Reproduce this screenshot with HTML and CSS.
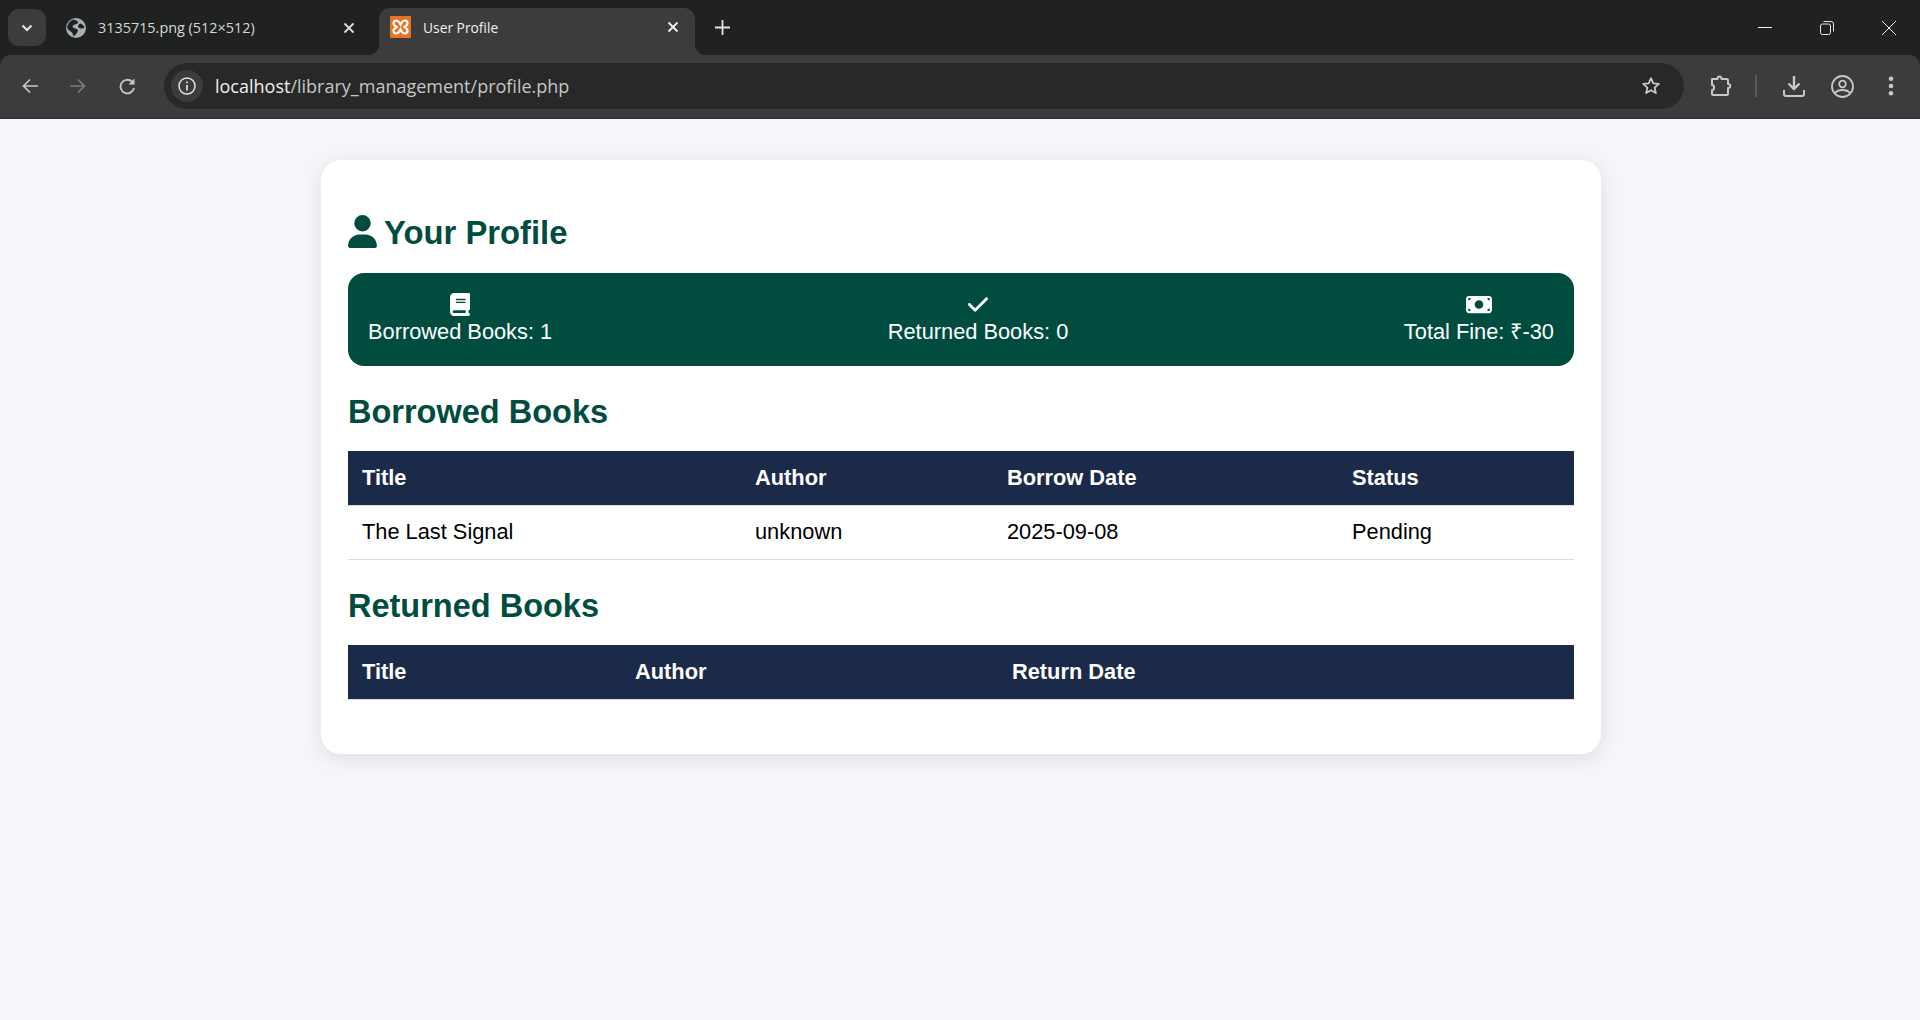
FILE: index.html

```html
<!DOCTYPE html>
<html lang="en">
<head>
  <meta charset="UTF-8" />
  <title>User Profile</title>
  <link rel="stylesheet" href="styles.css">
</head>
<body>
  <div class="browser">
    <div class="tabstrip">
      <div class="tab-search">
        <svg width="14" height="14" viewBox="0 0 14 14"><path d="M2.500 4.500 7 9l4.500-4.500" fill="none" stroke="#e3e3e3" stroke-width="2.200"/></svg>
      </div>
      <div class="tab">
        <svg class="favicon" width="20" height="20" viewBox="0 0 20 20"><circle cx="10" cy="10" r="10" fill="#a9aeb4"/><path d="M7 1.500c2.500.5 5 1 5 2.700 0 2-3.500 1.800-5 3.300-1.300 1.300.5 2.500 2.500 3 2 .5 3 1.800 2 3.500-.8 1.400-2 3-4 4.500-.5-2-.8-3.500-2-4.500C4 13 1.800 11.500 1 10 1.500 6 3.500 3 7 1.500zM14.500 5.500c1.700.7 3.500 2 4 4-1.500 1.500-4.500 1.300-6 0-1.200-1.200.4-3.700 2-4z" fill="#202221"/></svg>
        <span class="tab-title">3135715.png (512×512)</span>
        <svg class="tab-x" width="12" height="12" viewBox="0 0 12 12"><path d="M1.500 1.500l9 9M10.500 1.500l-9 9" stroke="#dcdcdc" stroke-width="1.800"/></svg>
      </div>
      <div class="tab tab-active">
        <svg class="favicon" width="21" height="22" viewBox="0 0 21 22"><rect width="21" height="22" rx="1" fill="#e8742a"/><path d="M10.500 8.500C9 5.500 7.500 4.500 6 4.500c-2 0-2.500 2-2.500 3S5 10.500 7.500 11C5 11.500 3.500 13.500 3.500 14.500s.5 3 2.500 3c1.500 0 3-1 4.500-4 1.500 3 3 4 4.500 4 2 0 2.500-2 2.500-3S16 11.500 13.500 11c2.500-.5 4-2.500 4-3.500s-.5-3-2.500-3c-1.500 0-3 1-4.500 4z" fill="none" stroke="#fff" stroke-width="2.200"/></svg>
        <span class="tab-title">User Profile</span>
        <svg class="tab-x" width="12" height="12" viewBox="0 0 12 12"><path d="M1.500 1.500l9 9M10.500 1.500l-9 9" stroke="#f0f0f0" stroke-width="1.800"/></svg>
      </div>
      <svg class="new-tab" width="15" height="15" viewBox="0 0 15 15"><path d="M7.500 0v15M0 7.500h15" stroke="#e3e3e3" stroke-width="1.800"/></svg>
      <div class="window-btns">
        <svg width="14" height="14" viewBox="0 0 14 14"><path d="M0 6.500h14" stroke="#f0f0f0"/></svg>
        <svg width="14" height="14" viewBox="0 0 14 14"><rect x=".5" y="3" width="10" height="10.500" rx="2" fill="none" stroke="#e8e8e8"/><path d="M3.500 .5h7.500a2.500 2.500 0 0 1 2.500 2.500V10.500" fill="none" stroke="#e8e8e8"/></svg>
        <svg width="14" height="14" viewBox="0 0 14 14"><path d="M0 0l14 14M14 0L0 14" stroke="#f0f0f0"/></svg>
      </div>
    </div>
    <div class="toolbar">
      <svg class="nav" width="16" height="16" viewBox="0 0 16 16"><path d="M16 8H1.500M8 1.500 1.500 8 8 14.500" fill="none" stroke="#c8c8c8" stroke-width="1.700"/></svg>
      <svg class="nav nav-forward" width="16" height="16" viewBox="0 0 16 16"><path d="M0 8h14.500M8 1.500 14.500 8 8 14.500" fill="none" stroke="#7b7b7b" stroke-width="1.700"/></svg>
      <svg class="nav nav-last" width="17" height="17" viewBox="0 0 17 17"><path d="M15 10a6.800 6.800 0 1 1-1.900-6.300" fill="none" stroke="#c8c8c8" stroke-width="1.800"/><path d="M15.500 .5v6h-6z" fill="#c8c8c8"/></svg>
      <div class="omnibox">
        <div class="site-info">
          <svg width="18" height="18" viewBox="0 0 18 18"><circle cx="9" cy="9" r="8" fill="none" stroke="#e3e3e3" stroke-width="1.500"/><path d="M9 8v5.500M9 4.500v1.800" stroke="#e3e3e3" stroke-width="1.700"/></svg>
        </div>
        <span class="url"><span class="url-host">localhost</span>/library_management/profile.php</span>
        <svg class="star" width="20" height="20" viewBox="0 0 20 20"><path d="M10 2.200l2.300 5.200 5.600.5-4.300 3.700 1.300 5.500L10 14.200l-4.900 2.900 1.300-5.500L2.100 7.900l5.600-.5z" fill="none" stroke="#c8c8c8" stroke-width="1.800" stroke-linejoin="round"/></svg>
      </div>
      <div class="tools">
        <svg class="tool-ext" width="22" height="22" viewBox="0 0 22 22"><path d="M2 4h5.500c0-3.500 4-3.500 4 0H17a1 1 0 0 1 1 1v4c3 0 3 4 0 4v6a1 1 0 0 1-1 1H3a1 1 0 0 1-1-1v-4c2.800 0 2.800-5 0-5V5a1 1 0 0 1 0-1z" fill="none" stroke="#c8c8c8" stroke-width="2" stroke-linejoin="round"/></svg>
        <span class="tool-sep"></span>
        <svg class="tool-download" width="22" height="22" viewBox="0 0 22 22"><path d="M11 1v13M5.500 8.500 11 14l5.500-5.500" fill="none" stroke="#c8c8c8" stroke-width="2.400"/><path d="M1 15v4a2 2 0 0 0 2 2h16a2 2 0 0 0 2-2v-4" fill="none" stroke="#c8c8c8" stroke-width="2"/></svg>
        <svg class="tool-profile" width="23" height="23" viewBox="0 0 23 23"><circle cx="11.500" cy="11.500" r="10.500" fill="none" stroke="#c8c8c8" stroke-width="1.800"/><circle cx="11.500" cy="9" r="3.300" fill="none" stroke="#c8c8c8" stroke-width="1.800"/><path d="M4 18c3-4 12-4 15 0" fill="none" stroke="#c8c8c8" stroke-width="1.800"/></svg>
        <svg class="tool-menu" width="6" height="20" viewBox="0 0 6 20"><circle cx="3" cy="2.700" r="2.300" fill="#c8c8c8"/><circle cx="3" cy="10" r="2.300" fill="#c8c8c8"/><circle cx="3" cy="17.300" r="2.300" fill="#c8c8c8"/></svg>
      </div>
    </div>
  </div>

  <div class="profile-container">
    <h1 class="profile-heading">
      <svg width="29" height="33" viewBox="0 0 448 512"><path fill="#004d40" d="M224 256a128 128 0 1 0 0-256 128 128 0 1 0 0 256zm-45.700 48C79.800 304 0 383.800 0 482.300 0 498.700 13.300 512 29.700 512h388.600c16.400 0 29.700-13.300 29.700-29.700C448 383.800 368.200 304 269.700 304z"/></svg>
      Your Profile
    </h1>

    <div class="stats">
      <div class="stat">
        <svg width="20" height="23" viewBox="0 0 448 512"><path fill="#fff" d="M96 0C43 0 0 43 0 96v320c0 53 43 96 96 96h320c17.700 0 32-14.300 32-32s-14.300-32-32-32v-64c17.700 0 32-14.300 32-32V32c0-17.700-14.300-32-32-32zm0 384h256v64H96c-17.700 0-32-14.300-32-32s14.300-32 32-32zm32-240c0-8.800 7.200-16 16-16h192c8.800 0 16 7.200 16 16s-7.200 16-16 16H144c-8.800 0-16-7.200-16-16zm16 48h192c8.800 0 16 7.200 16 16s-7.200 16-16 16H144c-8.800 0-16-7.200-16-16s7.200-16 16-16z"/></svg>
        <span>Borrowed Books: 1</span>
      </div>
      <div class="stat">
        <svg width="20" height="23" viewBox="0 0 448 512"><path fill="#fff" d="M438.600 105.400c12.500 12.500 12.500 32.800 0 45.300l-256 256c-12.500 12.500-32.800 12.500-45.300 0l-128-128c-12.500-12.500-12.500-32.800 0-45.300s32.800-12.500 45.300 0L160 338.700l233.400-233.300c12.500-12.500 32.800-12.500 45.300 0z"/></svg>
        <span>Returned Books: 0</span>
      </div>
      <div class="stat">
        <svg width="26" height="23" viewBox="0 0 576 512"><path fill="#fff" fill-rule="evenodd" d="M64 64C28.700 64 0 92.700 0 128v256c0 35.300 28.700 64 64 64h448c35.300 0 64-28.700 64-64V128c0-35.300-28.700-64-64-64zm224 96a96 96 0 1 1 0 192 96 96 0 1 1 0-192zM48 168v-40c0-8.800 7.200-16 16-16h40c0 30.900-25.100 56-56 56zm0 176c30.900 0 56 25.100 56 56H64c-8.800 0-16-7.200-16-16zm480 0v40c0 8.800-7.200 16-16 16h-40c0-30.900 25.100-56 56-56zm0-176c-30.900 0-56-25.100-56-56h40c8.800 0 16 7.200 16 16z"/></svg>
        <span>Total Fine: ₹-30</span>
      </div>
    </div>

    <h2 class="section-heading">Borrowed Books</h2>
    <table class="books">
      <colgroup>
        <col class="col-b1"><col class="col-b2"><col class="col-b3"><col>
      </colgroup>
      <thead>
        <tr><th>Title</th><th>Author</th><th>Borrow Date</th><th>Status</th></tr>
      </thead>
      <tbody>
        <tr><td>The Last Signal</td><td>unknown</td><td>2025-09-08</td><td>Pending</td></tr>
      </tbody>
    </table>

    <h2 class="section-heading">Returned Books</h2>
    <table class="books">
      <colgroup>
        <col class="col-r1"><col class="col-r2"><col>
      </colgroup>
      <thead>
        <tr><th>Title</th><th>Author</th><th>Return Date</th></tr>
      </thead>
    </table>
  </div>
</body>
</html>
```

FILE: styles.css

```css
* {
  box-sizing: border-box;
}
body {
  margin: 0;
  min-height: 1020px;
  background: #f4f6f9;
  font-family: "Liberation Sans", Arial, sans-serif;
  overflow: hidden;
}

/* browser chrome */
.browser {
  height: 119px;
  background: #202221;
  font-family: "Open Sans", "Noto Sans", sans-serif;
}
.tabstrip {
  height: 55px;
  padding-left: 8px;
  display: flex;
  align-items: center;
  color: #d8d8d8;
  font-size: 14.400px;
}
.tab-search {
  width: 38px;
  height: 37px;
  border-radius: 11px;
  background: #3c3c3c;
  display: flex;
  align-items: center;
  justify-content: center;
}
.tab {
  width: 326px;
  display: flex;
  align-items: center;
  padding: 0 17px 0 20px;
  gap: 12px;
}
.tab-title {
  flex: 1;
  white-space: nowrap;
}
.tab-active {
  position: relative;
  align-self: flex-end;
  width: 316px;
  height: 47px;
  margin-left: 7px;
  padding: 0 16px 9px 11px;
  background: #3c3c3c;
  border-radius: 11px 11px 0 0;
  color: #f0f0f0;
  font-size: 13.800px;
}
/* the curved feet of the active tab */
.tab-active::before,
.tab-active::after {
  content: "";
  position: absolute;
  bottom: 0;
  width: 11px;
  height: 11px;
}
.tab-active::before {
  left: -11px;
  background: radial-gradient(circle at 0 0, transparent 11px, #3c3c3c 11.500px);
}
.tab-active::after {
  right: -11px;
  background: radial-gradient(circle at 100% 0, transparent 11px, #3c3c3c 11.500px);
}
.new-tab {
  margin-left: 20px;
}
.window-btns {
  margin-left: auto;
  margin-right: 24px;
  display: flex;
  gap: 48px;
}
.toolbar {
  height: 64px;
  padding: 8px 0 8px 22px;
  background: #3c3c3c;
  border-bottom: 2px solid #353535;
  border-radius: 11px 11px 0 0;
  display: flex;
  align-items: center;
}
.nav {
  margin-right: 32px;
}
.nav-forward {
  margin-right: 33px;
}
.nav-last {
  margin-right: 28px;
}
.omnibox {
  width: 1520px;
  height: 46px;
  padding: 0 23px 0 7px;
  background: #282828;
  border-radius: 23px;
  display: flex;
  align-items: center;
  color: #c4c7c5;
  font-size: 18px;
}
.site-info {
  width: 32px;
  height: 32px;
  border-radius: 16px;
  background: #3c3c3c;
  display: flex;
  align-items: center;
  justify-content: center;
  margin-right: 12px;
}
.url {
  flex: 1;
}
.url-host {
  color: #f0f0f0;
}
.tools {
  display: flex;
  align-items: center;
}
.tool-ext {
  margin-left: 26px;
}
.tool-sep {
  width: 2px;
  height: 22px;
  margin-left: 23px;
  background: #5a5a5a;
}
.tool-download {
  margin-left: 26px;
}
.tool-profile {
  margin-left: 26px;
}
.tool-menu {
  margin-left: 34px;
}

/* page */
.profile-container {
  width: 1280px;
  height: 594px;
  margin: 41px 0 0 321px;
  padding: 27px;
  background: #fff;
  border-radius: 20px;
  box-shadow: 0 4px 20px rgba(0, 0, 0, 0.1);
}
.profile-heading {
  margin: 27px 0 21px;
  display: flex;
  align-items: flex-start;
  gap: 7px;
  color: #004d40;
  font-size: 32.800px;
  line-height: 38px;
  font-weight: bold;
}
.profile-heading svg {
  margin-top: 1px;
}
.stats {
  height: 93px;
  padding: 20px;
  background: #004d40;
  border-radius: 16px;
  display: flex;
  justify-content: space-between;
  color: #fff;
  font-size: 21.800px;
}
.stat {
  display: flex;
  flex-direction: column;
  align-items: center;
  gap: 4px;
  line-height: 24px;
}
.stat svg {
  display: block;
}
.section-heading {
  margin: 27px 0 19px;
  color: #004d40;
  font-size: 32.500px;
  line-height: 39px;
}
.books {
  width: 100%;
  border-collapse: separate;
  border-spacing: 0;
  table-layout: fixed;
  font-size: 21.800px;
}
.books th {
  height: 55px;
  padding: 0 14px;
  background: #1c2a4a;
  border-bottom: 1px solid #ddd;
  color: #fff;
  text-align: left;
}
.books td {
  height: 54px;
  padding: 0 14px 2px;
  border-bottom: 1px solid #ddd;
  color: #000;
}
.col-b1 { width: 393px; }
.col-b2 { width: 252px; }
.col-b3 { width: 345px; }
.col-r1 { width: 273px; }
.col-r2 { width: 377px; }
```
